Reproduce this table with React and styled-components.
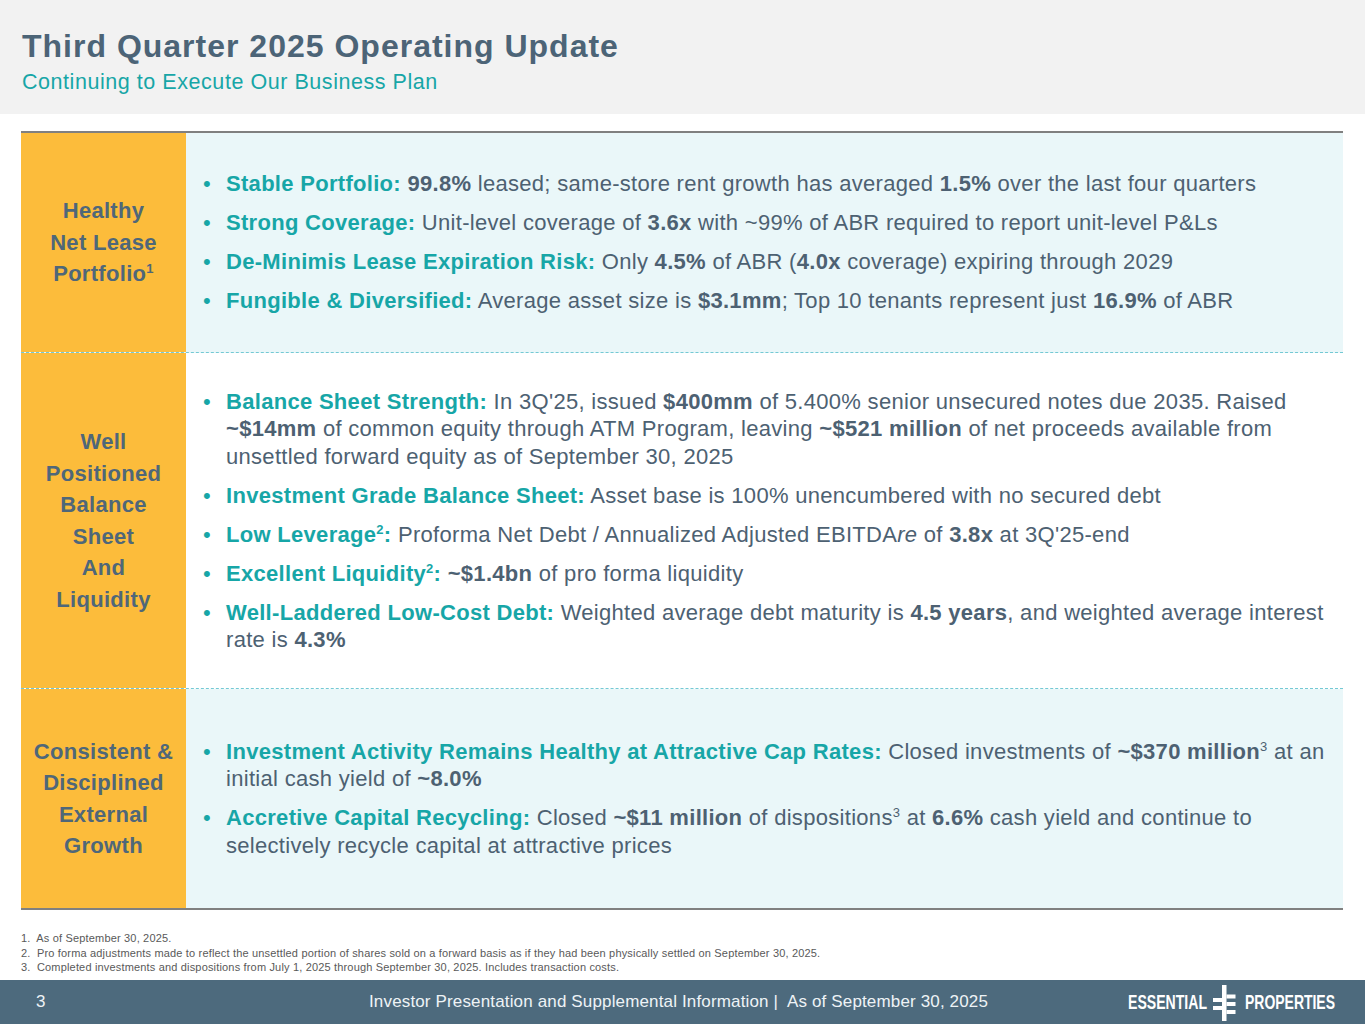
import React from "react";
import styled, { createGlobalStyle } from "styled-components";

const Global = createGlobalStyle`
  html, body { margin: 0; padding: 0; background: #ffffff; }
  body { font-family: "Liberation Sans", Arial, sans-serif; }
  * { box-sizing: border-box; }
`;

const Page = styled.div`
  width: 1365px;
  height: 1024px;
  display: flex;
  flex-direction: column;
  background: #ffffff;
  overflow: hidden;
`;

const Header = styled.header`
  height: 114px;
  background: #f2f2f2;
  padding: 27px 0 0 22px;
  flex-shrink: 0;
`;

const Title = styled.h1`
  margin: 0;
  font-size: 32px;
  line-height: 38px;
  letter-spacing: 1px;
  font-weight: 700;
  color: #4c6477;
`;

const Subtitle = styled.div`
  margin-top: 5px;
  font-size: 21.5px;
  line-height: 24px;
  letter-spacing: 0.55px;
  color: #17a6a7;
`;

const Table = styled.section`
  margin: 17px 22px 0 21px;
  border-top: 2px solid #808080;
  border-bottom: 2px solid #808080;
  flex-shrink: 0;
`;

const Row = styled.div`
  display: grid;
  grid-template-columns: 165px 1fr;
  height: ${(p) => p.$h}px;
  background: ${(p) => (p.$tinted ? "#eaf7f9" : "#ffffff")};
  border-bottom: ${(p) => (p.$last ? "none" : "1.5px dashed #74c9d4")};
`;

const Label = styled.div`
  background: #fcbc3b;
  display: flex;
  align-items: center;
  justify-content: center;
  text-align: center;
  font-size: 22px;
  letter-spacing: 0.3px;
  line-height: 31.5px;
  font-weight: 700;
  color: #4f6779;
`;

const Content = styled.div`
  display: flex;
  align-items: center;
  padding: 0 4px 0 17px;
`;

const List = styled.ul`
  margin: 0;
  padding: 0;
  list-style: none;
  display: flex;
  flex-direction: column;
  gap: 11.5px;
  width: 100%;
`;

const Item = styled.li`
  display: grid;
  grid-template-columns: 23px 1fr;
  font-size: 22px;
  letter-spacing: 0.3px;
  line-height: 27.5px;
  color: #4d6172;
  &::before {
    content: "•";
    color: #17a6a7;
  }
`;

const Key = styled.span`
  color: #17a6a7;
  font-weight: 700;
`;

const B = styled.b`
  font-weight: 700;
  color: #4d6172;
`;

const Sup = styled.sup`
  font-size: 13px;
  line-height: 0;
  vertical-align: 8px;
`;

const Notes = styled.ol`
  margin: 21px 0 0 21px;
  padding: 0;
  list-style: none;
  font-size: 11px;
  letter-spacing: 0.17px;
  line-height: 14.5px;
  color: #595959;
`;

const Note = styled.li``;

const Footer = styled.footer`
  margin-top: auto;
  height: 44px;
  background: #4d6a7d;
  display: grid;
  grid-template-columns: 330px 1fr 237px;
  align-items: center;
  color: #eef3f6;
  flex-shrink: 0;
`;

const PageNum = styled.div`
  padding-left: 36px;
  font-size: 17px;
`;

const FootText = styled.div`
  font-size: 17px;
  letter-spacing: 0.15px;
  padding-left: 39px;
`;

const LogoBox = styled.div`
  height: 44px;
  display: flex;
  align-items: stretch;
`;

function Logo() {
  return (
    <svg width="212" height="44" viewBox="0 0 212 44" aria-label="Essential Properties">
      <text
        x="0"
        y="29"
        fill="#ffffff"
        fontFamily="Liberation Sans, Arial, sans-serif"
        fontWeight="700"
        fontSize="21"
        textLength="79"
        lengthAdjust="spacingAndGlyphs"
      >
        ESSENTIAL
      </text>
      <rect x="94" y="5" width="4.5" height="36" fill="#ffffff" />
      <rect x="85" y="18" width="9" height="4" fill="#ffffff" />
      <rect x="85" y="26" width="9" height="4" fill="#ffffff" />
      <rect x="98.5" y="14.5" width="9" height="4" fill="#ffffff" />
      <rect x="98.5" y="22" width="9" height="4" fill="#ffffff" />
      <rect x="98.5" y="30" width="9" height="4" fill="#ffffff" />
      <text
        x="117"
        y="29"
        fill="#ffffff"
        fontFamily="Liberation Sans, Arial, sans-serif"
        fontWeight="700"
        fontSize="21"
        textLength="90"
        lengthAdjust="spacingAndGlyphs"
      >
        PROPERTIES
      </text>
    </svg>
  );
}

export default function App() {
  return (
    <>
      <Global />
      <Page>
        <Header>
          <Title>Third Quarter 2025 Operating Update</Title>
          <Subtitle>Continuing to Execute Our Business Plan</Subtitle>
        </Header>

        <Table>
          <Row $h={220} $tinted>
            <Label>
              <div>
                Healthy
                <br />
                Net Lease
                <br />
                Portfolio<Sup>1</Sup>
              </div>
            </Label>
            <Content>
              <List>
                <Item>
                  <span>
                    <Key>Stable Portfolio:</Key> <B>99.8%</B> leased; same-store rent growth has averaged <B>1.5%</B> over
                    the last four quarters
                  </span>
                </Item>
                <Item>
                  <span>
                    <Key>Strong Coverage:</Key> Unit-level coverage of <B>3.6x</B> with ~99% of ABR required to report
                    unit-level P&amp;Ls
                  </span>
                </Item>
                <Item>
                  <span>
                    <Key>De-Minimis Lease Expiration Risk:</Key> Only <B>4.5%</B> of ABR (<B>4.0x</B> coverage) expiring
                    through 2029
                  </span>
                </Item>
                <Item>
                  <span>
                    <Key>Fungible &amp; Diversified:</Key> Average asset size is <B>$3.1mm</B>; Top 10 tenants represent
                    just <B>16.9%</B> of ABR
                  </span>
                </Item>
              </List>
            </Content>
          </Row>

          <Row $h={336}>
            <Label>
              <div>
                Well
                <br />
                Positioned
                <br />
                Balance
                <br />
                Sheet
                <br />
                And
                <br />
                Liquidity
              </div>
            </Label>
            <Content>
              <List>
                <Item>
                  <span>
                    <Key>Balance Sheet Strength:</Key> In 3Q'25, issued <B>$400mm</B> of 5.400% senior unsecured notes
                    due 2035. Raised <B>~$14mm</B> of common equity through ATM Program, leaving{" "}
                    <B>~$521 million</B> of net proceeds available from unsettled forward equity as of September 30, 2025
                  </span>
                </Item>
                <Item>
                  <span>
                    <Key>Investment Grade Balance Sheet:</Key> Asset base is 100% unencumbered with no secured debt
                  </span>
                </Item>
                <Item>
                  <span>
                    <Key>
                      Low Leverage<Sup>2</Sup>:
                    </Key>{" "}
                    Proforma Net Debt / Annualized Adjusted EBITDA<i>re</i> of <B>3.8x</B> at 3Q'25-end
                  </span>
                </Item>
                <Item>
                  <span>
                    <Key>
                      Excellent Liquidity<Sup>2</Sup>:
                    </Key>{" "}
                    <B>~$1.4bn</B> of pro forma liquidity
                  </span>
                </Item>
                <Item>
                  <span>
                    <Key>Well-Laddered Low-Cost Debt:</Key> Weighted average debt maturity is <B>4.5 years</B>, and
                    weighted average interest rate is <B>4.3%</B>
                  </span>
                </Item>
              </List>
            </Content>
          </Row>

          <Row $h={219} $tinted $last>
            <Label>
              <div>
                Consistent &amp;
                <br />
                Disciplined
                <br />
                External
                <br />
                Growth
              </div>
            </Label>
            <Content>
              <List>
                <Item>
                  <span>
                    <Key>Investment Activity Remains Healthy at Attractive Cap Rates:</Key> Closed investments of{" "}
                    <B>~$370 million</B>
                    <Sup>3</Sup> at an initial cash yield of <B>~8.0%</B>
                  </span>
                </Item>
                <Item>
                  <span>
                    <Key>Accretive Capital Recycling:</Key> Closed <B>~$11 million</B> of dispositions<Sup>3</Sup> at{" "}
                    <B>6.6%</B> cash yield and continue to selectively recycle capital at attractive prices
                  </span>
                </Item>
              </List>
            </Content>
          </Row>
        </Table>

        <Notes>
          <Note>1.&nbsp; As of September 30, 2025.</Note>
          <Note>
            2.&nbsp; Pro forma adjustments made to reflect the unsettled portion of shares sold on a forward basis as if
            they had been physically settled on September 30, 2025.
          </Note>
          <Note>
            3.&nbsp; Completed investments and dispositions from July 1, 2025 through September 30, 2025. Includes
            transaction costs.
          </Note>
        </Notes>

        <Footer>
          <PageNum>3</PageNum>
          <FootText>Investor Presentation and Supplemental Information |&nbsp; As of September 30, 2025</FootText>
          <LogoBox>
            <Logo />
          </LogoBox>
        </Footer>
      </Page>
    </>
  );
}
